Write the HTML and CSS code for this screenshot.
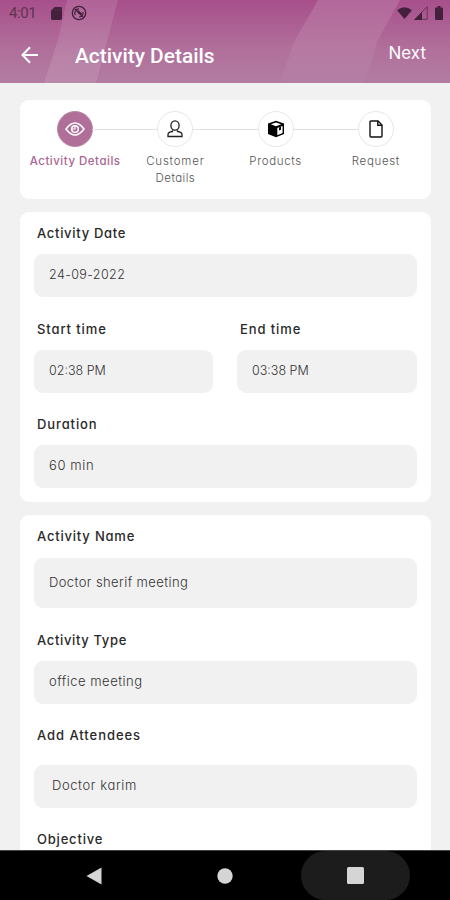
FILE: index.html
```html
<!DOCTYPE html>
<html lang="en">
<head>
<meta charset="utf-8">
<title>Activity Details</title>
<link rel="stylesheet" href="styles.css">
</head>
<body>
<div class="screen">
  <header class="header">
    <svg class="header-art" viewBox="0 0 450 83" preserveAspectRatio="none" aria-hidden="true">
      <path d="M67 0H118L96 83H44L58 40Z" fill="#fff" fill-opacity=".11"/>
      <path d="M318 0H400L377 42L365 83H280L294 42Z" fill="url(#band)"/>
      <defs><linearGradient id="band" x1="0" y1="0" x2="0" y2="1"><stop offset="0" stop-color="#fff" stop-opacity=".14"/><stop offset="1" stop-color="#fff" stop-opacity=".02"/></linearGradient></defs>
    </svg>
    <div class="status">
      <span class="clock">4:01</span>
      <svg class="sd" width="11" height="13" viewBox="0 0 12 14"><path d="M4 0H10.500Q12 0 12 1.500V12.500Q12 14 10.500 14H1.500Q0 14 0 12.500V4Z" fill="#43213c"/><path d="M4.500 2V4.500M7 2V4.500M9.500 2V4.500" stroke="#5b2c4f"/></svg>
      <svg class="sync" width="16" height="16" viewBox="0 0 16 16" fill="none" stroke="#43213c"><circle cx="8" cy="8" r="6.700" stroke-width="1.300"/><path d="M4.200 10A4.300 4.300 0 0 1 8 3.900M11.900 7A4 4 0 0 1 8 12M4 4L12 12" stroke-width="1.200"/><path d="M7 5.500L11 9L7.500 8.500Z" fill="#43213c"/></svg>
      <svg class="wifi" width="15" height="13" viewBox="0 0 16 14"><path d="M0 3.500Q8-3 16 3.500L8 13Z" fill="#43213c"/></svg>
      <svg class="signal" width="14" height="14" viewBox="0 0 14 14"><path d="M.8 13.300H13.200V.8Z" fill="none" stroke="#43213c" stroke-opacity=".65"/><path d="M0 14H8V6Z" fill="#43213c"/></svg>
      <svg class="battery" width="8" height="14" viewBox="0 0 8 14"><path d="M2.500 0H5.500V1.500H7Q8 1.500 8 2.500V13Q8 14 7 14H1Q0 14 0 13V2.500Q0 1.500 1 1.500H2.500Z" fill="#43213c"/></svg>
    </div>
    <div class="appbar">
      <svg class="back" width="18" height="18" viewBox="0 0 18 18" fill="none" stroke="#fff" stroke-width="2"><path d="M17 9H2M9 1.300L1.500 9L9 16.700"/></svg>
      <h1 class="title">Activity Details</h1>
      <span class="next">Next</span>
    </div>
  </header>

  <main class="content">
    <nav class="card steps">
      <div class="step active">
        <div class="dot"><svg width="20" height="14" viewBox="0 0 20 14" fill="none" stroke="#fff" stroke-width="1.500"><path d="M1 7Q10-5 19 7Q10 19 1 7Z"/><circle cx="10" cy="7" r="3.300"/><path d="M10 4V7H7" stroke-width="1.200"/></svg></div>
        <span class="step-name">Activity Details</span>
      </div>
      <div class="step">
        <div class="dot"><svg width="16" height="18" viewBox="0 0 16 18" fill="none" stroke="#222" stroke-width="1.300"><ellipse cx="8" cy="5.500" rx="4.100" ry="4.700"/><path d="M5.500 10.300V11.500Q1 12 1 14.500V16.500H15V14.500Q15 12 10.500 11.500V10.300"/></svg></div>
        <span class="step-name customer">Customer<br><span class="second">Details</span></span>
      </div>
      <div class="step">
        <div class="dot"><svg width="18" height="18" viewBox="0 0 18 18"><path d="M9 .8L17 3.500V14L9 17.300L1 14V3.500Z" fill="#000"/><path d="M3.800 4.300L9 2.500L14.200 4.300L9 6.200Z" fill="#fff"/><path d="M10.300 8L15.600 6V13L10.300 15.200Z" fill="#fff"/><path d="M12 7.500L14 6.700V9.800L12 10.500Z" fill="#000"/></svg></div>
        <span class="step-name">Products</span>
      </div>
      <div class="step">
        <div class="dot"><svg width="14" height="18" viewBox="0 0 14 18" fill="none" stroke="#111" stroke-width="1.400"><path d="M9 1H2Q1 1 1 2V16Q1 17 2 17H12Q13 17 13 16V5Z"/><path d="M8.800 1V5.200H13"/></svg></div>
        <span class="step-name">Request</span>
      </div>
    </nav>

    <section class="card schedule">
      <div class="field"><div class="label l-date">Activity Date</div><div class="value v-date">24-09-2022</div></div>
      <div class="pair">
        <div class="field start"><div class="label l-start">Start time</div><div class="value v-time">02:38 PM</div></div>
        <div class="field end"><div class="label l-end">End time</div><div class="value v-time">03:38 PM</div></div>
      </div>
      <div class="field"><div class="label l-duration">Duration</div><div class="value v-duration">60 min</div></div>
    </section>

    <section class="card details">
      <div class="field name"><div class="label l-name">Activity Name</div><div class="value tall v-name">Doctor sherif meeting</div></div>
      <div class="field type"><div class="label l-type">Activity Type</div><div class="value v-type">office meeting</div></div>
      <div class="field attendees"><div class="label l-attendees">Add Attendees</div><div class="value v-attendee">Doctor karim</div></div>
      <div class="field"><div class="label l-objective">Objective</div></div>
    </section>
  </main>

  <footer class="navbar">
    <div class="key"><svg width="16" height="18" viewBox="0 0 16 18"><path d="M15.500.5V17.500L.5 9Z" fill="#d5d5d5"/></svg></div>
    <div class="key"><svg width="16" height="16" viewBox="0 0 16 16"><circle cx="8" cy="8" r="7.700" fill="#d5d5d5"/></svg></div>
    <div class="key pressed"><svg width="17" height="17" viewBox="0 0 17 17"><rect width="17" height="17" rx="1.500" fill="#d5d5d5"/></svg></div>
  </footer>
</div>
</body>
</html>
```

FILE: styles.css
```css
* { box-sizing: border-box; }
body { margin: 0; font-family: Inter, "Open Sans", sans-serif; font-feature-settings: "cv11" 1; background: #f1f1f1; }
svg { display: block; flex: none; }
.screen { width: 450px; height: 900px; display: flex; flex-direction: column; overflow: hidden; }

.header { position: relative; flex: none; height: 83px; background: linear-gradient(#a74f8b, #b1709b 60%, #b27ca2); }
.header-art { position: absolute; inset: 0; width: 450px; height: 83px; }
.status { position: relative; display: flex; align-items: center; height: 26px; padding-left: 9px; }
.clock { width: 42px; font: 15px/26px Roboto, sans-serif; color: #60334f; letter-spacing: -.4px; }
.sync { margin-left: 9px; }
.wifi { margin-left: 310px; }
.signal { margin-left: 2px; }
.battery { margin-left: 7px; }
.appbar { position: relative; display: flex; align-items: center; height: 57px; padding: 0 24px 0 21px; }
.title { margin: 2px 0 0 36px; font: 500 20.9px/28px Roboto, sans-serif; color: #fff; }
.next { margin: -3px 0 0 auto; font-size: 17px; line-height: 24px; color: #fff; }

.content { flex: 1; min-height: 0; overflow: hidden; padding: 17px 19px 0 20px; display: flex; flex-direction: column; gap: 13px; }
.card { flex: none; background: #fff; border-radius: 9px; }
.steps { height: 99px; padding: 11px 5px 0; display: grid; grid-template-columns: repeat(4, 1fr); }
.step { display: flex; flex-direction: column; align-items: center; gap: 6px; text-align: center; }
.dot { position: relative; display: flex; align-items: center; justify-content: center; width: 36px; height: 36px; border: 1px solid #e7e7e7; border-radius: 50%; }
.step + .step .dot::before { content: ""; position: absolute; right: 35px; width: 65px; height: 1px; background: #e2e2e2; }
.active .dot { background: #b06f98; border-color: #b98aa8; }
.step-name { font-size: 11.500px; line-height: 17px; font-weight: 300; color: #555; white-space: nowrap; letter-spacing: .65px; }
.customer { letter-spacing: .8px; }
.second { letter-spacing: .45px; }
.active .step-name { color: #aa6690; font-weight: 500; letter-spacing: .5px; }

.schedule { height: 290px; padding: 11px 14px 0; }
.details { height: 420px; padding: 11px 14px 0; }
.field { margin-bottom: 22px; }
.start, .end { margin-bottom: 21px; }
.label { height: 21px; margin: 0 0 10px 3px; font-size: 13px; line-height: 20px; font-weight: 500; color: #292929; white-space: nowrap; letter-spacing: .8px; }
.l-date { letter-spacing: .7px; }
.l-start, .l-end, .l-duration { letter-spacing: .9px; }
.l-type { letter-spacing: .65px; }
.l-attendees { letter-spacing: .95px; }
.value { height: 43px; padding: 0 15px; border-radius: 9px; background: #f1f1f1; font-size: 13px; line-height: 41px; font-weight: 300; color: #333; white-space: nowrap; }
.v-date, .v-time { font-size: 12.500px; }
.v-date { letter-spacing: .4px; }
.v-duration { letter-spacing: .6px; }
.v-name { letter-spacing: .4px; }
.v-type { letter-spacing: .5px; }
.v-attendee { letter-spacing: .6px; }
.tall { height: 50px; line-height: 49px; }
.name .label { margin-bottom: 11px; }
.type { margin-bottom: 21px; }
.pair { display: grid; grid-template-columns: 179px 180px; gap: 24px; }
.attendees { margin-bottom: 21px; }
.attendees .label { margin-bottom: 19px; }
.attendees .value { padding-left: 18px; }

.navbar { flex: none; height: 50px; border-top: 1px solid #444; background: #000; display: flex; padding: 0 40px; gap: 22px; }
.key { width: 109px; height: 49px; display: flex; align-items: center; justify-content: center; border-radius: 25px; }
.pressed { background: #1c1c1c; }
```
